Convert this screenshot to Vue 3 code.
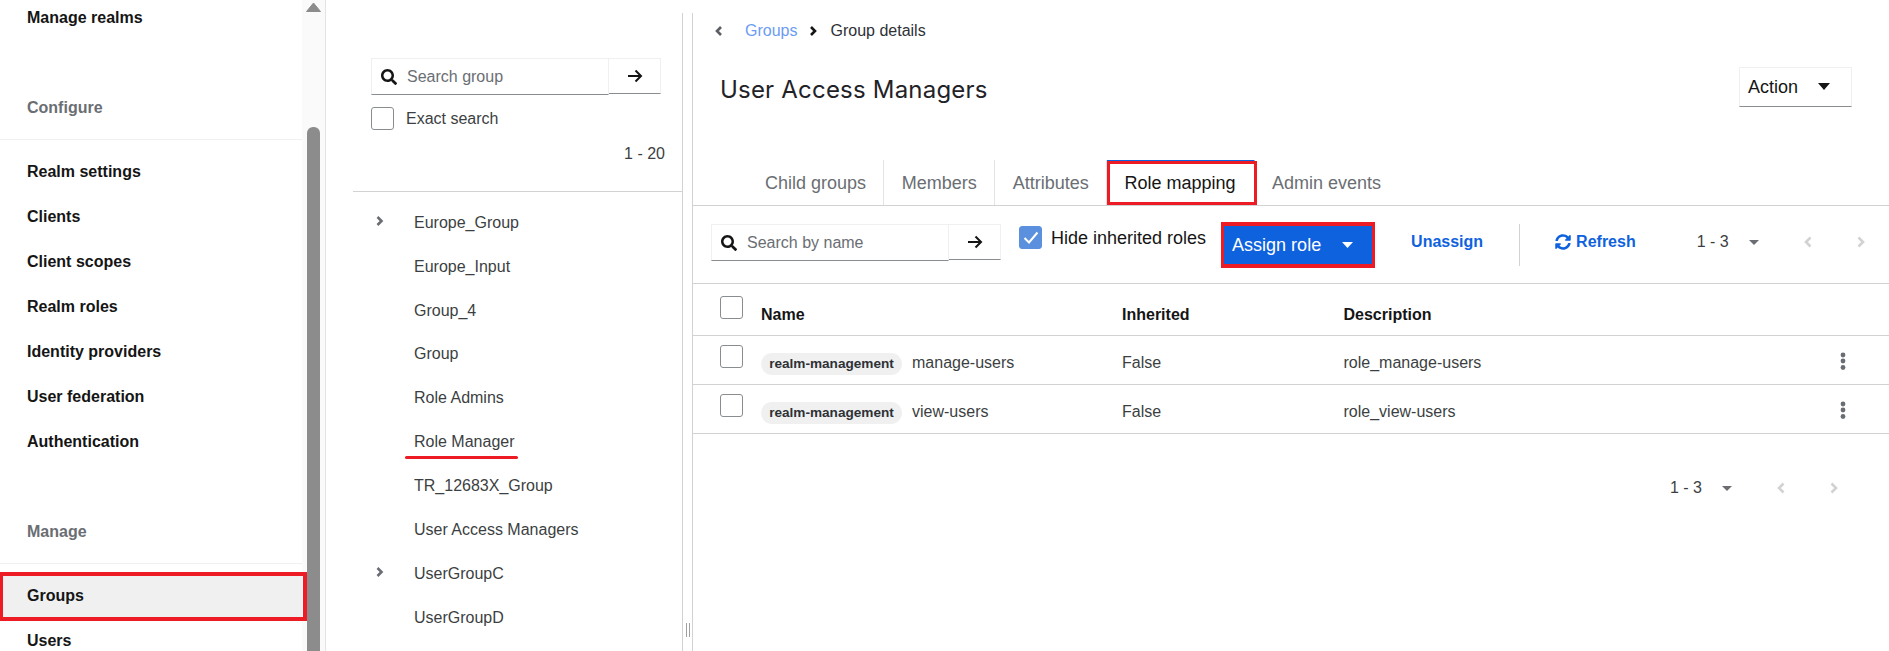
<script setup>
const configure = ['Realm settings', 'Clients', 'Client scopes', 'Realm roles', 'Identity providers', 'User federation', 'Authentication']
const tree = [
  { name: 'Europe_Group', more: true },
  { name: 'Europe_Input' },
  { name: 'Group_4' },
  { name: 'Group' },
  { name: 'Role Admins' },
  { name: 'Role Manager', marked: true },
  { name: 'TR_12683X_Group' },
  { name: 'User Access Managers' },
  { name: 'UserGroupC', more: true },
  { name: 'UserGroupD' }
]
const tabs = ['Child groups', 'Members', 'Attributes', 'Role mapping', 'Admin events']
const rows = [
  { role: 'manage-users', desc: 'role_manage-users' },
  { role: 'view-users', desc: 'role_view-users' }
]
const searchPath = 'M505 442.7L405.3 343c-4.5-4.5-10.6-7-17-7H372c27.6-35.3 44-79.7 44-128C416 93.1 322.9 0 208 0S0 93.1 0 208s93.1 208 208 208c48.3 0 92.7-16.4 128-44v16.3c0 6.4 2.5 12.5 7 17l99.7 99.7c9.4 9.4 24.6 9.4 33.9 0l28.3-28.3c9.4-9.4 9.4-24.6.1-34zM208 336c-70.7 0-128-57.2-128-128 0-70.7 57.2-128 128-128 70.7 0 128 57.2 128 128 0 70.7-57.2 128-128 128z'
const syncPath = 'M370.72 133.28C339.458 104.008 298.888 87.962 255.848 88c-77.458.068-144.328 53.178-162.791 126.85-1.344 5.363-6.122 9.15-11.651 9.15H24.103c-7.498 0-13.194-6.807-11.807-14.176C33.933 94.924 134.813 8 256 8c66.448 0 126.791 26.136 171.315 68.685L463.03 40.97C478.149 25.851 504 36.559 504 57.941V192c0 13.255-10.745 24-24 24H345.941c-21.382 0-32.09-25.851-16.971-40.971l41.75-41.749zM32 296h134.059c21.382 0 32.09 25.851 16.971 40.971l-41.75 41.75c31.262 29.273 71.835 45.319 114.876 45.28 77.418-.07 144.315-53.144 162.787-126.849 1.344-5.363 6.122-9.15 11.651-9.15h57.304c7.498 0 13.194 6.807 11.807 14.176C478.067 417.076 377.187 504 256 504c-66.448 0-126.791-26.136-171.315-68.685L48.97 471.03C33.851 486.149 8 475.441 8 454.059V320c0-13.255 10.745-24 24-24z'
</script>

<template>
  <div class="page">
    <aside class="nav">
      <div class="nav-scroll">
        <div class="nav-item">Manage realms</div>
        <div class="nav-heading">Configure</div>
        <div class="nav-list">
          <div v-for="item in configure" :key="item" class="nav-item">{{ item }}</div>
        </div>
        <div class="nav-heading">Manage</div>
        <div class="nav-list">
          <div class="nav-item current">Groups</div>
          <div class="nav-item">Users</div>
        </div>
      </div>
      <div class="scrollbar">
        <svg class="scroll-up" width="15" height="10" viewBox="0 0 15 10"><path d="M7.500 1 14.500 9.500H.5z" fill="#8c8c8c" stroke="#8c8c8c" stroke-linejoin="round"/></svg>
        <div class="scroll-thumb"></div>
      </div>
    </aside>

    <div class="content">
      <section class="tree-pane">
        <div class="tree-head">
          <div class="search tree-search">
            <div class="search-field">
              <svg class="search-icon" viewBox="0 0 512 512"><path :d="searchPath" fill="#151515"/></svg>
              <span class="placeholder">Search group</span>
            </div>
            <div class="search-go">
              <svg width="16" height="16" viewBox="0 0 16 16"><path d="M1 8h13M8.500 2.500 14 8l-5.500 5.500" fill="none" stroke="#151515" stroke-width="2"/></svg>
            </div>
          </div>
          <label class="exact"><span class="box"></span><span class="exact-text">Exact search</span></label>
          <div class="tree-count">1 - 20</div>
        </div>
        <ul class="tree-list">
          <li v-for="g in tree" :key="g.name" class="tree-item">
            <svg v-if="g.more" class="tree-chev" width="8" height="10" viewBox="0 0 8 10"><path d="M1.500 1 5.500 5 1.500 9" fill="none" stroke="#6a6e73" stroke-width="2.600"/></svg>
            <span :class="['tree-name', { marked: g.marked }]">{{ g.name }}</span>
          </li>
        </ul>
      </section>

      <div class="splitter"><span class="grip"></span></div>

      <main class="main">
        <nav class="crumbs">
          <svg class="crumb-back" width="8" height="10" viewBox="0 0 8 10"><path d="M6 1 2 5 6 9" fill="none" stroke="#5b5e62" stroke-width="2.600"/></svg>
          <a class="crumb-link">Groups</a>
          <svg class="crumb-sep" width="8" height="10" viewBox="0 0 8 10"><path d="M2 1 6 5 2 9" fill="none" stroke="#151515" stroke-width="2.600"/></svg>
          <span class="crumb-here">Group details</span>
        </nav>

        <header class="head">
          <h1>User Access Managers</h1>
          <div class="action">
            <span>Action</span>
            <svg width="12" height="7" viewBox="0 0 12 7"><path d="M0 0h12L6 7z" fill="#151515"/></svg>
          </div>
        </header>

        <div class="tabs">
          <div v-for="t in tabs" :key="t" :class="['tab', { active: t === 'Role mapping' }]">{{ t }}</div>
        </div>

        <div class="toolbar">
          <div class="search bar-search">
            <div class="search-field">
              <svg class="search-icon" viewBox="0 0 512 512"><path :d="searchPath" fill="#151515"/></svg>
              <span class="placeholder">Search by name</span>
            </div>
            <div class="search-go">
              <svg width="16" height="16" viewBox="0 0 16 16"><path d="M1 8h13M8.500 2.500 14 8l-5.500 5.500" fill="none" stroke="#151515" stroke-width="2"/></svg>
            </div>
          </div>
          <label class="hide">
            <span class="box checked">
              <svg width="16" height="13" viewBox="0 0 16 13"><path d="M1.500 7 6 11.500 14.500 1.500" fill="none" stroke="#fff" stroke-width="2"/></svg>
            </span>
            <span class="hide-text">Hide inherited roles</span>
          </label>
          <button class="assign">
            <span>Assign role</span>
            <svg width="11" height="6" viewBox="0 0 11 6"><path d="M0 0h11L5.500 6z" fill="#fff"/></svg>
          </button>
          <span class="unassign">Unassign</span>
          <span class="divider"></span>
          <span class="refresh">
            <svg width="16" height="16" viewBox="0 0 512 512"><path :d="syncPath" fill="#0f62dd"/></svg>
            <span>Refresh</span>
          </span>
          <div class="pager top-pager">
            <span class="pager-text">1 - 3</span>
            <svg class="pager-caret" width="10" height="5" viewBox="0 0 10 5"><path d="M0 0h10L5 5z" fill="#6a6e73"/></svg>
            <svg class="pager-chev" width="8" height="12" viewBox="0 0 8 12"><path d="M6.500 1.500 2 6l4.500 4.500" fill="none" stroke="#d2d2d2" stroke-width="2.600"/></svg>
            <svg class="pager-chev" width="8" height="12" viewBox="0 0 8 12"><path d="M1.500 1.500 6 6l-4.500 4.500" fill="none" stroke="#d2d2d2" stroke-width="2.600"/></svg>
          </div>
        </div>

        <div class="table">
          <div class="row head-row">
            <span class="box"></span>
            <span class="cell">Name</span>
            <span class="cell">Inherited</span>
            <span class="cell">Description</span>
            <span></span>
          </div>
          <div v-for="r in rows" :key="r.role" class="row">
            <span class="box"></span>
            <span class="cell name-cell"><span class="chip">realm-management</span>{{ r.role }}</span>
            <span class="cell">False</span>
            <span class="cell">{{ r.desc }}</span>
            <svg class="kebab" width="6" height="18" viewBox="0 0 6 18"><circle cx="3" cy="3" r="2.400"/><circle cx="3" cy="9" r="2.400"/><circle cx="3" cy="15.500" r="2.400"/></svg>
          </div>
        </div>

        <div class="pager bottom-pager">
          <span class="pager-text">1 - 3</span>
          <svg class="pager-caret" width="10" height="5" viewBox="0 0 10 5"><path d="M0 0h10L5 5z" fill="#6a6e73"/></svg>
          <svg class="pager-chev" width="8" height="12" viewBox="0 0 8 12"><path d="M6.500 1.500 2 6l4.500 4.500" fill="none" stroke="#d2d2d2" stroke-width="2.600"/></svg>
          <svg class="pager-chev" width="8" height="12" viewBox="0 0 8 12"><path d="M1.500 1.500 6 6l-4.500 4.500" fill="none" stroke="#d2d2d2" stroke-width="2.600"/></svg>
        </div>
      </main>
    </div>
  </div>
</template>

<style scoped>
.page {
  display: flex;
  height: 651px;
  overflow: hidden;
  background: #fff;
  color: #151515;
  font: 16px/20px "Liberation Sans", Arial, sans-serif;
}

/* left navigation */
.nav { display: flex; flex: none; width: 326px; }
.nav-scroll { flex: none; width: 302px; margin-top: -5px; }
.nav-item {
  position: relative;
  height: 45px;
  padding-left: 27px;
  font-weight: 700;
  line-height: 45px;
}
.nav-heading {
  padding: 58px 0 21px 27px;
  border-bottom: 1px solid #f0f0f0;
  color: #6a6e73;
  font-weight: 700;
}
.nav-list { margin-top: 9px; }
.current { background: #f0f0f0; }
.current::after {
  content: "";
  position: absolute;
  inset: -1px -5px -3px 0;
  border: 4px solid #ed1c24;
  border-left-width: 3px;
}
.scrollbar {
  flex: none;
  width: 24px;
  background: #fafafa;
  border-right: 1px solid #e4e4e4;
  box-sizing: border-box;
  padding-left: 5px;
}
.scroll-up { display: block; margin: 2px 0 0 -1px; }
.scroll-thumb {
  width: 13px;
  height: 530px;
  margin-top: 115px;
  background: #8c8c8c;
  border-radius: 6px 6px 0 0;
}

/* content panes */
.content { display: flex; flex: 1; min-width: 0; margin-top: 13px; }
.tree-pane { flex: none; width: 357px; box-sizing: border-box; border-right: 1px solid #d2d2d2; }
.tree-head {
  margin-left: 27px;
  height: 179px;
  padding: 45px 0 0 18px;
  box-sizing: border-box;
  border-bottom: 1px solid #d2d2d2;
}
.search { display: flex; width: 290px; height: 36px; }
.search-field {
  display: flex;
  align-items: center;
  flex: 1;
  box-sizing: border-box;
  height: 37px;
  padding-left: 9px;
  border: 1px solid #f0f0f0;
  border-bottom: 1px solid #8a8d90;
}
.search-icon { flex: none; width: 16px; height: 16px; margin-right: 10px; }
.placeholder { color: #6a6e73; }
.search-go {
  display: flex;
  align-items: center;
  justify-content: center;
  flex: none;
  box-sizing: border-box;
  width: 52px;
  height: 36px;
  border: 1px solid #f0f0f0;
  border-left: 0;
  border-bottom: 1px solid #8a8d90;
}
.box {
  display: flex;
  align-items: center;
  justify-content: center;
  flex: none;
  box-sizing: border-box;
  width: 23px;
  height: 23px;
  border: 1px solid #8a8d90;
  border-radius: 3px;
  background: #fff;
}
.box.checked { background: #5a90dd; border-color: #5a90dd; }
.exact {
  display: flex;
  gap: 12px;
  margin-top: 13px;
  color: #3c3f42;
  line-height: 20px;
}
.exact-text { padding-top: 2px; }
.tree-count { margin-top: 14px; width: 294px; text-align: right; color: #3c3f42; }
.tree-list { list-style: none; margin: 0; padding: 9px 0 0; }
.tree-item {
  display: flex;
  align-items: center;
  height: 43.850px;
  padding-left: 88px;
  position: relative;
  color: #3c3f42;
}
.tree-chev { position: absolute; left: 50px; top: 15px; }
.tree-name { position: relative; }
.marked::after {
  content: "";
  position: absolute;
  left: -9px;
  right: -3px;
  top: 24px;
  height: 3px;
  border-radius: 2px;
  background: #ed1c24;
}

.splitter { flex: none; width: 9px; display: flex; justify-content: center; }
.grip {
  width: 2px;
  height: 14px;
  margin-top: 610px;
  border-left: 1px solid #a0a0a0;
  border-right: 1px solid #a0a0a0;
}

.main { flex: 1; min-width: 0; border-left: 1px solid #d2d2d2; }
.crumbs { display: flex; align-items: center; height: 36px; padding-left: 22px; }
.crumb-link { margin-left: 22px; color: #6b9cf2; }
.crumb-sep { margin-left: 12px; }
.crumb-here { margin-left: 13px; color: #2e3136; }
.head {
  display: flex;
  justify-content: space-between;
  align-items: center;
  height: 39px;
  margin-top: 18px;
  padding: 0 37px 0 27px;
}
h1 {
  margin: 6px 0 0;
  font: 400 24px/30px Inter, "Liberation Sans", sans-serif;
  letter-spacing: 0.2px;
  color: #1f2328;
}
.action {
  display: flex;
  align-items: center;
  justify-content: space-between;
  box-sizing: border-box;
  width: 113px;
  height: 40px;
  padding: 0 21px 0 8px;
  border: 1px solid #f0f0f0;
  border-bottom: 1px solid #8a8d90;
  font-size: 18px;
  color: #151515;
}
.tabs {
  display: flex;
  height: 46px;
  margin-top: 54px;
  padding-left: 54px;
  border-bottom: 1px solid #d2d2d2;
  box-sizing: border-box;
}
.tab {
  position: relative;
  padding: 1px 17.400px 0;
  border-right: 1px solid #e4e4e4;
  color: #6a6e73;
  font-size: 18px;
  line-height: 44px;
}
.tab:first-child { padding-left: 18px; }
.tab:last-child { border-right: 0; }
.tab.active {
  color: #151515;
  border-right-color: transparent;
  border-top: 1px solid #0f62dd;
  padding: 1px 18px 0 17.400px;
  line-height: 42px;
}
.tab.active::after {
  content: "";
  position: absolute;
  left: 0;
  right: -3px;
  top: 0;
  bottom: 0;
  border: 3px solid #ed1c24;
}

.toolbar {
  display: flex;
  align-items: flex-start;
  box-sizing: border-box;
  height: 78px;
  padding-left: 18px;
  border-bottom: 1px solid #d2d2d2;
}
.bar-search { margin-top: 18px; }
.hide { display: flex; margin: 20px 0 0 18px; }
.hide-text { margin-left: 9px; padding-top: 1px; line-height: 22px; font-size: 18px; color: #151515; }
.assign {
  display: flex;
  align-items: center;
  justify-content: space-between;
  box-sizing: border-box;
  width: 154px;
  height: 46px;
  margin: 16px 0 0 15px;
  padding: 0 19px 0 8px;
  border: 4px solid #ed1c24;
  border-width: 4px 3px;
  background: #0f62dd;
  color: #fff;
  font: 18px "Liberation Sans", Arial, sans-serif;
}
.unassign {
  width: 108px;
  margin: 18px 0 0 36px;
  box-sizing: border-box;
  color: #0f62dd;
  font-weight: 700;
  line-height: 36px;
}
.divider { width: 1px; height: 42px; margin-top: 18px; background: #d2d2d2; }
.refresh {
  display: flex;
  align-items: center;
  gap: 5px;
  height: 36px;
  margin: 18px 0 0 35px;
  color: #0f62dd;
  font-weight: 700;
}
.pager { display: flex; align-items: center; height: 36px; }
.top-pager { margin: 18px 0 0 61px; }
.pager-text { color: #3c3f42; }
.pager-caret { margin-left: 20px; }
.pager-chev { margin-left: 45px; }

.row {
  display: grid;
  grid-template-columns: 41px 361px 221.500px 1fr 49px;
  align-items: center;
  box-sizing: border-box;
  height: 49px;
  padding-left: 27px;
  border-bottom: 1px solid #d2d2d2;
  color: #3c3f42;
}
.row .box { margin-top: -7px; }
.row .cell { margin-top: 5px; }
.head-row { height: 52px; color: #151515; font-weight: 700; }
.head-row .box { margin-top: -4px; }
.head-row .cell { margin-top: 10px; }
.name-cell { display: flex; align-items: center; color: #3c3f42; }
.chip {
  box-sizing: border-box;
  width: 141px;
  height: 22px;
  margin: 3px 10px 0 0;
  border-radius: 11px;
  background: #f0f0f0;
  color: #2e3136;
  font-size: 13.600px;
  font-weight: 700;
  line-height: 22px;
  text-align: center;
}
.kebab { fill: #6a6e73; margin-top: 1px; }
.bottom-pager { justify-content: flex-end; margin-top: 36px; padding-right: 51px; }
</style>

<style>
html, body { margin: 0; overflow: hidden; }
</style>
